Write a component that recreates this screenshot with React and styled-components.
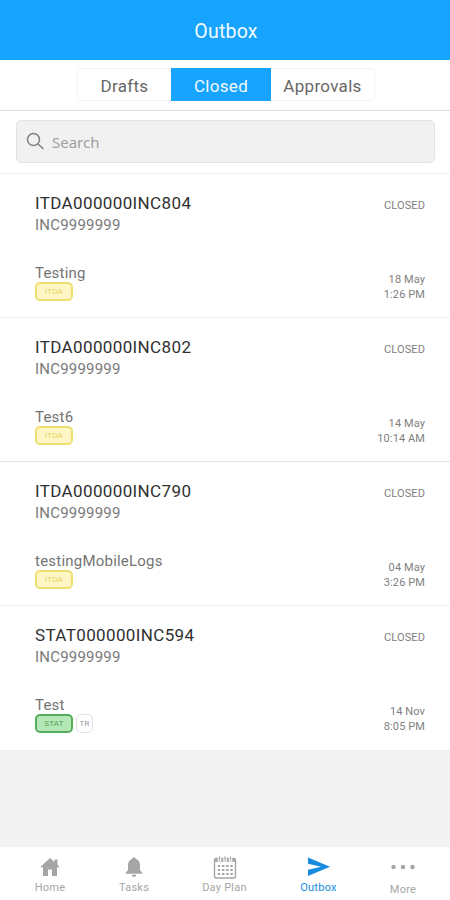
import React from 'react'
import styled, { createGlobalStyle } from 'styled-components'

const GlobalStyle = createGlobalStyle`
    * {
        box-sizing: border-box;
    }
    body {
        margin: 0;
        background: #f3f3f3;
        font-family: Roboto, "Liberation Sans", sans-serif;
    }
`
const Screen = styled.div`
    width: 100%;
    height: 900px;
    display: flex;
    flex-direction: column;
    overflow: hidden;
    background: #f3f3f3;
`
const Header = styled.header`
    height: 60px;
    flex: none;
    display: flex;
    align-items: center;
    justify-content: center;
    padding: 2px 0 0 2px;
    background: #16a4ff;
    color: #f2faff;
    font-size: 19.5px;
    letter-spacing: 0.2px;
`
const TabBar = styled.div`
    height: 51px;
    flex: none;
    display: flex;
    justify-content: center;
    padding: 8px 0 0 2px;
    background: #fff;
    border-bottom: 1px solid #dcdcdc;
`
const Tabs = styled.div`
    height: 33px;
    display: flex;
    border: 1px solid #f4f4f4;
    border-radius: 4px;
`
const Tab = styled.button`
    width: ${props => props.$width}px;
    margin: -1px 0;
    padding: 2px 0 0;
    border: none;
    background: ${props => props.$active ? '#16a4ff' : 'transparent'};
    color: ${props => props.$active ? '#f2faff' : '#686868'};
    font-family: inherit;
    font-size: 17px;
    letter-spacing: 0.3px;
`
const SearchArea = styled.div`
    height: 63px;
    flex: none;
    padding: 9px 15px 0 16px;
    background: #fff;
    border-bottom: 1px solid #eee;
`
const SearchBox = styled.div`
    height: 43px;
    display: flex;
    align-items: center;
    gap: 7px;
    padding-left: 9px;
    background: #f1f1f1;
    border: 1px solid #e3e3e3;
    border-radius: 5px;
    color: #a0a0a0;
    font-family: "Noto Sans", sans-serif;
    font-size: 15px;
`
const Row = styled.div`
    height: ${props => props.$height}px;
    flex: none;
    display: flex;
    justify-content: space-between;
    padding: 18px 25px 0 35px;
    background: #fff;
    border-bottom: 1px solid ${props => props.$line || '#efefef'};
`
const Column = styled.div`
    display: flex;
    flex-direction: column;
`
const Title = styled.div`
    height: 22px;
    line-height: 22px;
    font-size: 17px;
    letter-spacing: 0.37px;
    color: #303030;
`
const Reference = styled.div`
    height: 21px;
    line-height: 22px;
    font-size: 15px;
    letter-spacing: 0.2px;
    color: #7a7a7a;
`
const Summary = styled.div`
    height: 18px;
    line-height: 18px;
    margin-top: 29px;
    font-size: 15px;
    letter-spacing: 0.22px;
    color: #747474;
`
const Tags = styled.div`
    display: flex;
    gap: 3px;
`
const tones = {
    yellow: { back: '#fff6c6', line: '#eedf70', text: '#e6d251' },
    green: { back: '#b4e8b6', line: '#58ad5c', text: '#58a25b' },
    plain: { back: '#fff', line: '#e2e2e2', text: '#999' },
}
const Tag = styled.span`
    width: ${props => props.$width}px;
    height: 19px;
    display: flex;
    align-items: center;
    justify-content: center;
    background: ${props => tones[props.$tone].back};
    border: ${props => props.$tone === 'plain' ? 1 : 2}px solid ${props => tones[props.$tone].line};
    border-radius: 5px;
    color: ${props => tones[props.$tone].text};
    font-size: 8px;
    letter-spacing: 0.2px;
`
const Side = styled(Column)`
    align-items: flex-end;
    color: #808080;
    font-size: 11px;
    letter-spacing: 0.1px;
    line-height: 15px;
`
const Status = styled.div`
    margin: 6px 0 59px;
    font-size: 11px;
`
const Nav = styled.nav`
    height: 53px;
    flex: none;
    margin-top: auto;
    display: flex;
    padding: 0 3px 0 8px;
    background: #fff;
`
const NavItem = styled.div`
    width: ${props => props.$width}px;
    display: flex;
    flex-direction: column;
    align-items: center;
    padding-top: 7px;
    color: ${props => props.$active ? '#168be0' : '#a5a5a5'};
    font-size: 11px;
    letter-spacing: 0.25px;
    line-height: 15px;
`
const NavIcon = styled.svg`
    width: 26px;
    height: ${props => props.$height || 26}px;
    flex: none;
`

const SearchIcon = () => (
    <svg width="19" height="19" viewBox="0 0 19 19" fill="none" stroke="#808080" strokeWidth="1.5">
        <circle cx="7.5" cy="7.5" r="6" />
        <path d="M12 12l5.5 5" />
    </svg>
)
const HomeIcon = () => (
    <NavIcon viewBox="0 0 26 26" fill="currentColor">
        <path d="M13 4L3 13.2h3V22h5v-6.5h4V22h5v-8.8h3L20.5 11V5.5h-3v2.6z" />
    </NavIcon>
)
const BellIcon = () => (
    <NavIcon viewBox="0 0 26 26" fill="currentColor">
        <path d="M13 3.3c-1 0-1.8.7-1.8 1.7C8.4 5.8 7 8 7 11v5l-2.3 2.8v.9h16.6v-.9L19 16v-5c0-3-1.4-5.2-4.2-6 0-1-.8-1.7-1.8-1.7zM10.8 20.7a2.2 2.2 0 0 0 4.4 0z" />
    </NavIcon>
)
const CalendarIcon = () => (
    <NavIcon viewBox="0 0 26 26" fill="none" stroke="currentColor">
        <rect x="2.5" y="4.5" width="21" height="19.5" rx="1.5" strokeWidth="1.4" />
        <path d="M3 6.5h20" strokeWidth="2.6" />
        <path d="M7.5 2v5.5M13 2v5.5M18.5 2v5.5" stroke="#fff" strokeWidth="3.4" />
        <path d="M7.5 2.5v4M13 2.5v4M18.5 2.5v4" strokeWidth="1.3" />
        <path d="M5.8 12h15M5.8 16h15M5.8 20h15" strokeWidth="2" strokeDasharray="2.4 1.8" />
    </NavIcon>
)
const SendIcon = () => (
    <NavIcon viewBox="0 0 26 26" fill="currentColor">
        <path d="M2 3.5L24 12.7 2 22v-6.3l13-3-13-2.9z" />
    </NavIcon>
)
const MoreIcon = () => (
    <NavIcon $height={28} viewBox="0 0 26 28" fill="currentColor">
        <circle cx="3.5" cy="13" r="2.2" />
        <circle cx="13" cy="13" r="2.2" />
        <circle cx="22.5" cy="13" r="2.2" />
    </NavIcon>
)

const incidents = [
    { id: 'ITDA000000INC804', summary: 'Testing', date: '18 May', time: '1:26 PM', height: 144 },
    { id: 'ITDA000000INC802', summary: 'Test6', date: '14 May', time: '10:14 AM', height: 144, line: '#e2e2e2' },
    { id: 'ITDA000000INC790', summary: 'testingMobileLogs', date: '04 May', time: '3:26 PM', height: 144 },
    { id: 'STAT000000INC594', summary: 'Test', date: '14 Nov', time: '8:05 PM', height: 145, stat: true },
]

const Incident = ({ item }) => {
    return (
        <Row $height={item.height} $line={item.line}>
            <Column>
                <Title>{item.id}</Title>
                <Reference>INC9999999</Reference>
                <Summary>{item.summary}</Summary>
                <Tags>
                    <Tag $width={38} $tone={item.stat ? 'green' : 'yellow'}>{item.stat ? 'STAT' : 'ITDA'}</Tag>
                    {item.stat && <Tag $width={17} $tone="plain">TR</Tag>}
                </Tags>
            </Column>
            <Side>
                <Status>CLOSED</Status>
                <div>{item.date}</div>
                <div>{item.time}</div>
            </Side>
        </Row>
    )
}

const App = () => {
    return (
        <Screen>
            <GlobalStyle />
            <Header>Outbox</Header>
            <TabBar>
                <Tabs>
                    <Tab $width={93}>Drafts</Tab>
                    <Tab $width={100} $active>Closed</Tab>
                    <Tab $width={103}>Approvals</Tab>
                </Tabs>
            </TabBar>
            <SearchArea>
                <SearchBox><SearchIcon />Search</SearchBox>
            </SearchArea>
            {incidents.map((item) => <Incident key={item.id} item={item} />)}
            <Nav>
                <NavItem $width={84}><HomeIcon />Home</NavItem>
                <NavItem $width={84}><BellIcon />Tasks</NavItem>
                <NavItem $width={97}><CalendarIcon />Day Plan</NavItem>
                <NavItem $width={91} $active><SendIcon />Outbox</NavItem>
                <NavItem $width={78}><MoreIcon />More</NavItem>
            </Nav>
        </Screen>
    )
}

export default App
